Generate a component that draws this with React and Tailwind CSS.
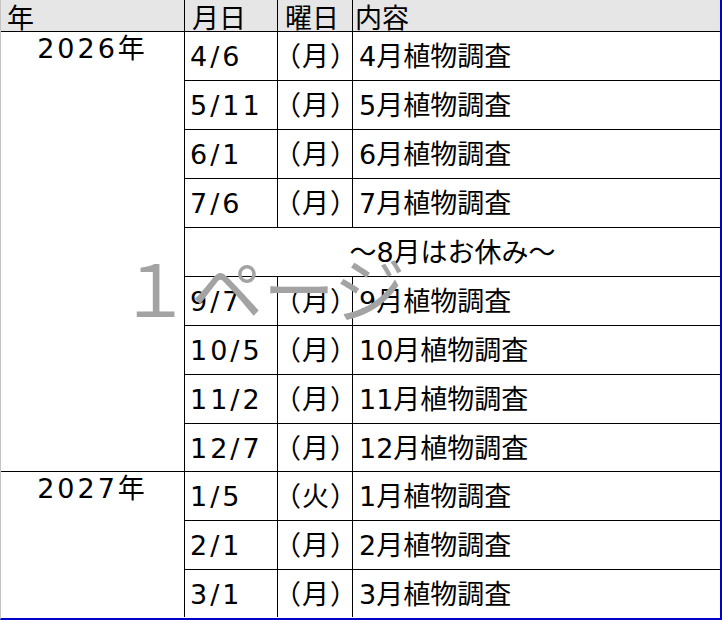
import React from 'react';

const rows2026 = [
  { date: '4/6', day: '月', text: '4月植物調査' },
  { date: '5/11', day: '月', text: '5月植物調査' },
  { date: '6/1', day: '月', text: '6月植物調査' },
  { date: '7/6', day: '月', text: '7月植物調査' },
  { rest: '～8月はお休み～' },
  { date: '9/7', day: '月', text: '9月植物調査' },
  { date: '10/5', day: '月', text: '10月植物調査' },
  { date: '11/2', day: '月', text: '11月植物調査' },
  { date: '12/7', day: '月', text: '12月植物調査' },
];

const rows2027 = [
  { date: '1/5', day: '火', text: '1月植物調査' },
  { date: '2/1', day: '月', text: '2月植物調査' },
  { date: '3/1', day: '月', text: '3月植物調査', last: true },
];

const font = { fontFamily: '"DejaVu Sans", "Noto Sans CJK JP", sans-serif' };

function Row({ r, last }) {
  const h = last ? 'h-[47px]' : 'h-[49px] border-b border-black';
  if (r.rest) {
    return (
      <div className={`col-span-3 ${h} flex justify-center pt-[11px] leading-none whitespace-nowrap`}>
        {r.rest}
      </div>
    );
  }
  return (
    <>
      <div className={`${h} border-r border-black pl-[5px] pt-[11px] leading-none whitespace-nowrap tracking-[3px]`}>{r.date}</div>
      <div className={`${h} border-r border-black pt-[11px] leading-none whitespace-nowrap`}>
        <span className="ml-[-4px] tracking-[1px]">（{r.day}）</span>
      </div>
      <div className={`${h} pl-[6px] pt-[11px] leading-none whitespace-nowrap`}>{r.text}</div>
    </>
  );
}

export default function App() {
  return (
    <div className="w-[722px] h-[620px] bg-white relative overflow-hidden text-[27px] text-black" style={font}>
      <div className="w-full h-full border-l border-[#c4c4c4] border-r-2 border-b-2 border-r-[#0000cc] border-b-[#0000cc]">
        {/* header */}
        <div className="grid grid-cols-[184px_93px_75px_1fr] h-[32px] bg-[#e6e6e6] border-b border-black leading-none">
          <div className="border-r border-black pl-[6px] pt-[5px]">年</div>
          <div className="border-r border-black pl-[7px] pt-[5px]">月日</div>
          <div className="border-r border-black pl-[7px] pt-[5px]">曜日</div>
          <div className="pl-[2px] pt-[5px]">内容</div>
        </div>

        {/* 2026 */}
        <div className="grid grid-cols-[184px_1fr] border-b border-black">
          <div className="border-r border-black flex justify-center pt-[3px] leading-none tracking-[3px]">
            <span>2026年</span>
          </div>
          <div className="grid grid-cols-[93px_75px_1fr]">
            {rows2026.map((r, i) => (
              <Row key={i} r={r} last={i === rows2026.length - 1} />
            ))}
          </div>
        </div>

        {/* 2027 */}
        <div className="grid grid-cols-[184px_1fr]">
          <div className="border-r border-black flex justify-center pt-[3px] leading-none tracking-[3px]">
            <span>2027年</span>
          </div>
          <div className="grid grid-cols-[93px_75px_1fr]">
            {rows2027.map((r, i) => (
              <Row key={i} r={r} last={r.last} />
            ))}
          </div>
        </div>
      </div>

      {/* page watermark */}
      <div className="absolute left-[119px] top-[250px] text-[72px] leading-none text-[#a3a3a3] pointer-events-none whitespace-nowrap" style={{ fontFamily: '"Noto Sans CJK JP", sans-serif' }}>
        １ページ
      </div>
    </div>
  );
}
